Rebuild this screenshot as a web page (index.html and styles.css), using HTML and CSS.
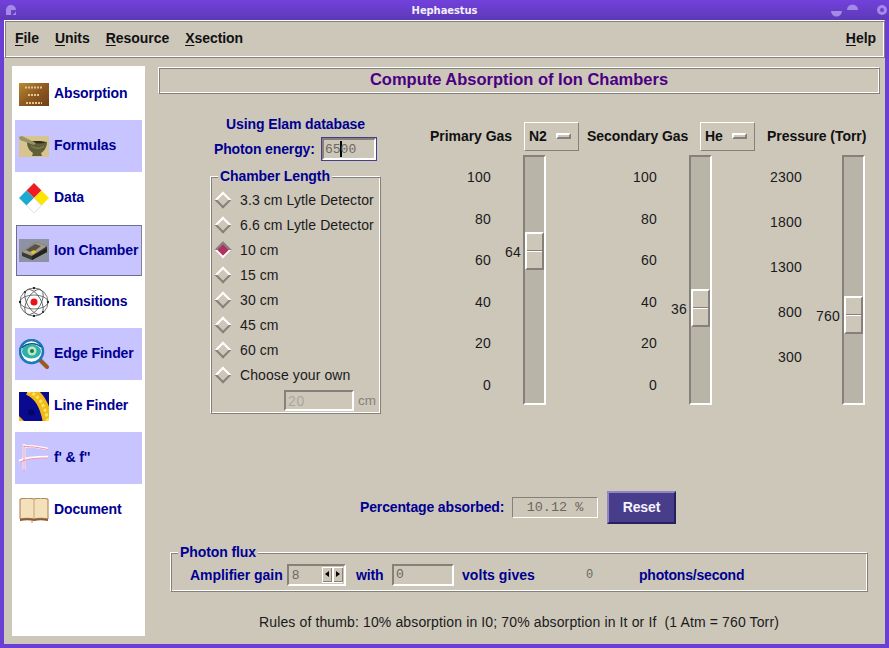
FILE: index.html
```html
<!DOCTYPE html>
<html lang="en">
<head>
<meta charset="utf-8">
<title>Hephaestus</title>
<link rel="stylesheet" href="styles.css">
</head>
<body>
<div class="window">
  <header class="titlebar">
    <svg class="wm wm-menu" width="12" height="12" viewBox="0 0 12 12"><path d="M1 6a5 5 0 1 1 5 5H1z M6 6v5h5V6z" fill="#a48ae6"/><path d="M6 6h5v1H7v4H6z" fill="#6a3fd0"/></svg>
    <span class="wintitle">Hephaestus</span>
    <svg class="wm wm-right" width="60" height="16" viewBox="0 0 60 16"><path d="M0 9h11a5.500 5.500 0 0 1-11 0z" fill="#a48ae6"/><path d="M16 8a5.500 5.500 0 0 1 11 0z" fill="#a48ae6"/><circle cx="51" cy="8" r="5" fill="#a48ae6"/><circle cx="51" cy="8" r="2" fill="#6a3fd0"/></svg>
  </header>
  <div class="client">
    <nav class="menubar ridge">
      <span class="menu"><u>F</u>ile</span>
      <span class="menu"><u>U</u>nits</span>
      <span class="menu"><u>R</u>esource</span>
      <span class="menu"><u>X</u>section</span>
      <span class="menu menu-help"><u>H</u>elp</span>
    </nav>
    <div class="main">
      <aside class="sidebar">
        <div class="nav">
          <svg class="icon" viewBox="0 0 30 23"><defs><linearGradient id="g1" x1="0" y1="0" x2="1" y2="1"><stop offset="0" stop-color="#b88a34"/><stop offset=".5" stop-color="#8f5a22"/><stop offset="1" stop-color="#6e3f1a"/></linearGradient></defs><rect width="30" height="23" fill="url(#g1)"/><g stroke="#e2c68c" stroke-width="1.800" stroke-dasharray="2 1"><path d="M6 4.500h18M9 12h12M7 20h16"/></g></svg>
          <span>Absorption</span>
        </div>
        <div class="nav nav-alt">
          <svg class="icon" viewBox="0 0 30 21"><rect width="30" height="21" fill="#d8c48e"/><path d="M8 6c6 1.500 14 1.500 20 0 0 6-4 10-6 11l1 3H13l1-3c-3-2-6-5-6-11z" fill="#5f5f38"/><path d="M8 6c6-1.500 14-1.500 20 0-5 2-15 2-20 0z" fill="#2f2c18"/><path d="M0 1l3-1 14 7-2 2L1 4z" fill="#96946a"/><path d="M12 10c4 3 10 3 13 0" stroke="#8f8c60" fill="none"/></svg>
          <span>Formulas</span>
        </div>
        <div class="nav">
          <svg class="icon" viewBox="0 0 30 30"><path d="M15 0l7.500 7.500L15 15 7.500 7.500z" fill="#ee1c25"/><path d="M7.500 7.500L15 15l-7.500 7.500L0 15z" fill="#1caad0"/><path d="M22.500 7.500L30 15l-7.500 7.500L15 15z" fill="#ffe400"/><path d="M15 15l7.500 7.500L15 30l-7.500-7.500z" fill="#fff" stroke="#ccc" stroke-width=".6"/></svg>
          <span>Data</span>
        </div>
        <div class="nav nav-alt nav-active">
          <svg class="icon" viewBox="0 0 30 23"><rect width="30" height="23" fill="#8d93a3"/><path d="M3 13L17 3l11 4v6L13 21 3 17z" fill="#3c3a35"/><path d="M3 13l10 4 15-10-11-4z" fill="#a39c88"/><path d="M7 11l9-6 6 2-9 7z" fill="#57524a"/><path d="M11 13l4-2 2 2-3 2z" fill="#e6c52a"/><path d="M13 17v4l15-8V9z" fill="#24231f"/></svg>
          <span>Ion Chamber</span>
        </div>
        <div class="nav">
          <svg class="icon" viewBox="0 0 30 30"><g fill="none" stroke="#555" stroke-width=".8"><circle cx="15" cy="15" r="14"/><ellipse cx="15" cy="15" rx="14" ry="7"/><ellipse cx="15" cy="15" rx="14" ry="7" transform="rotate(60 15 15)"/><ellipse cx="15" cy="15" rx="14" ry="7" transform="rotate(120 15 15)"/></g><circle cx="15" cy="15" r="3.500" fill="#ee1111"/><g fill="#222"><circle cx="15" cy="1" r="1.200"/><circle cx="29" cy="15" r="1.200"/><circle cx="15" cy="29" r="1.200"/><circle cx="1" cy="15" r="1.200"/><circle cx="6" cy="5" r="1"/><circle cx="24" cy="25" r="1"/></g></svg>
          <span>Transitions</span>
        </div>
        <div class="nav nav-alt">
          <svg class="icon" viewBox="0 0 30 30"><path d="M20 20l8 8" stroke="#9a5a20" stroke-width="4" stroke-linecap="round"/><circle cx="12.500" cy="12.500" r="11.500" fill="#fff" stroke="#1878b8" stroke-width="2.500"/><ellipse cx="12.500" cy="12.500" rx="9.500" ry="7" fill="#2fb0a8"/><circle cx="13" cy="12" r="4.500" fill="#bce8c0"/><circle cx="13" cy="12" r="2" fill="#157a58"/><path d="M3 9c4-5 14-6 19-1" stroke="#0c5a8a" stroke-width="1.500" fill="none"/></svg>
          <span>Edge Finder</span>
        </div>
        <div class="nav">
          <svg class="icon" viewBox="0 0 30 29"><rect width="30" height="29" fill="#0a0a90"/><path d="M9 -2C19 2 26 11 29 31" fill="none" stroke="#f4b818" stroke-width="10"/><path d="M9 -1C19 3 26 12 29 30" fill="none" stroke="#f8e858" stroke-width="3" stroke-dasharray="3 2"/><path d="M0 24l5 5H0z" fill="#f4b818"/><path d="M9 18c3-1 6 0 7 3-1 3-5 3-7 1z" fill="#050560"/></svg>
          <span>Line Finder</span>
        </div>
        <div class="nav nav-alt">
          <svg class="icon" viewBox="0 0 30 30"><g fill="none"><path d="M5 1v26M5 3c4 0 10 0 24 3M0 18c6-3 14-4 29-4" stroke="#fff" stroke-width="2.500"/><path d="M5 2v26M5 3.500c4 0 10 0 24 3M1 19c6-3 14-4 28-4" stroke="#f08aa0" stroke-width="1"/></g></svg>
          <span>f' &amp; f''</span>
        </div>
        <div class="nav">
          <svg class="icon" viewBox="0 0 30 25"><path d="M1 1c5-1 10-1 14 0 4-1 9-1 14 0v20c-5-1-10-1-14 0-4-1-9-1-14 0z" fill="#f5e0bc" stroke="#a67c4a"/><path d="M15 1v20" stroke="#c8a474"/><path d="M1 21c5-1 10-1 14 0 4-1 9-1 14 0v2c-5-1-10-1-14 0-4-1-9-1-14 0z" fill="#8a5a30"/><path d="M13 23v2" stroke="#c08a70"/></svg>
          <span>Document</span>
        </div>
      </aside>
      <main class="content">
        <h1 class="heading ridge">Compute Absorption of Ion Chambers</h1>
        <div class="upper">
          <section class="left">
            <div class="elam">Using Elam database</div>
            <div class="energy">
              <label class="blue energy-label">Photon energy:</label>
              <div class="entry entry-focus">65<i class="caret"></i>00</div>
            </div>
            <div class="group ridge chamber">
              <span class="legend">Chamber Length</span>
              <div class="radio"><i class="diamond"></i>3.3 cm Lytle Detector</div>
              <div class="radio"><i class="diamond"></i>6.6 cm Lytle Detector</div>
              <div class="radio"><i class="diamond diamond-on"></i>10 cm</div>
              <div class="radio"><i class="diamond"></i>15 cm</div>
              <div class="radio"><i class="diamond"></i>30 cm</div>
              <div class="radio"><i class="diamond"></i>45 cm</div>
              <div class="radio"><i class="diamond"></i>60 cm</div>
              <div class="radio"><i class="diamond"></i>Choose your own</div>
              <div class="own"><div class="entry entry-own">20</div><span>cm</span></div>
            </div>
          </section>
          <section class="right">
            <div class="gashead">
              <span class="gaslabel gl1">Primary Gas</span>
              <div class="optmenu ridge-out">N2<i class="optmark"></i></div>
              <span class="gaslabel gl2">Secondary Gas</span>
              <div class="optmenu ridge-out">He<i class="optmark"></i></div>
              <span class="gaslabel gl3">Pressure (Torr)</span>
            </div>
            <div class="scales">
              <div class="scale s1">
                <div class="ticks"><span>100</span><span>80</span><span>60</span><span>40</span><span>20</span><span>0</span></div>
                <div class="trough"><div class="thumb t1"><span class="val">64</span></div></div>
              </div>
              <div class="scale s2">
                <div class="ticks"><span>100</span><span>80</span><span>60</span><span>40</span><span>20</span><span>0</span></div>
                <div class="trough"><div class="thumb t2"><span class="val">36</span></div></div>
              </div>
              <div class="scale s3">
                <div class="ticks ticks-p"><span>2300</span><span>1800</span><span>1300</span><span>800</span><span>300</span></div>
                <div class="trough"><div class="thumb t3"><span class="val">760</span></div></div>
              </div>
            </div>
          </section>
        </div>
        <div class="result">
          <span class="blue result-label">Percentage absorbed:</span>
          <div class="readout">10.12 %</div>
          <button class="reset">Reset</button>
        </div>
        <div class="group ridge flux">
          <span class="legend">Photon flux</span>
          <span class="blue fl-amp">Amplifier gain</span>
          <div class="spin">8<span class="spinbtns"><i class="sbtn sl"></i><i class="sbtn sr"></i></span></div>
          <span class="blue fl-with">with</span>
          <div class="entry entry-volts">0</div>
          <span class="blue fl-volts">volts gives</span>
          <span class="photons">0</span>
          <span class="blue fl-photons">photons/second</span>
        </div>
        <p class="rules">Rules of thumb: 10% absorption in I0; 70% absorption in It or If&nbsp; (1 Atm = 760 Torr)</p>
      </main>
    </div>
  </div>
</div>
</body>
</html>
```

FILE: styles.css
```css
* { box-sizing: border-box; }
html, body { margin: 0; padding: 0; }
body { width: 889px; height: 648px; overflow: hidden; font-family: "Liberation Sans", Arial, sans-serif; }
.window { width: 889px; height: 648px; display: flex; flex-direction: column; background: #6b3fd4; }
.titlebar { height: 20px; flex: none; display: flex; align-items: center; justify-content: center; position: relative; background: linear-gradient(#7241dc, #5d39b6); }
.wintitle { color: #f2eefc; font: bold 10px "DejaVu Sans", sans-serif; letter-spacing: -.1px; }
.wm { position: absolute; }
.wm-menu { left: 5px; top: 4px; }
.wm-right { left: 831px; top: 2px; }
.client { flex: 1; margin: 0 4px 4px; background: #cdc7ba; display: flex; flex-direction: column; min-height: 0; }
.ridge { border: 1px solid; border-color: #fff #85817a #85817a #fff; box-shadow: inset 1px 1px 0 #85817a, inset -1px -1px 0 #fff; }
.menubar { height: 38px; flex: none; display: flex; align-items: center; padding: 0 8px 2px 10px; gap: 16px; font: bold 14px "Liberation Sans", sans-serif; letter-spacing: -.05px; color: #111; }
.menu u { text-decoration-thickness: 1px; text-underline-offset: 2px; }
.menu-help { margin-left: auto; }
.main { flex: 1; display: flex; min-height: 0; padding: 8px 0 8px 8px; }
.sidebar { width: 133px; flex: none; background: #fff; padding: 2px 3px 0; }
.nav { height: 52px; display: flex; align-items: center; padding: 0 0 0 4px; gap: 5px; color: #000090; font: bold 14px "Liberation Sans", sans-serif; letter-spacing: -.12px; }
.nav span { position: relative; top: -1px; }
.nav-alt { background: #c8c4ff; }
.nav-active { border: 1px solid #6f6e8e; border-right-color: #85819a; margin: 1px 0 0 1px; height: 51px; padding-left: 2px; }
.icon { width: 30px; flex: none; display: block; height: auto; }
.content { width: 722px; margin-left: 13px; flex: none; }
.heading { margin: 1px 0 0; height: 27px; color: #4b0082; font: bold 16.500px/23px "Liberation Sans", sans-serif; text-align: center; }
.upper { display: flex; height: 320px; }
.left { width: 171px; margin-left: 52px; flex: none; }
.elam { margin-top: 22px; height: 16px; line-height: 16px; text-align: center; color: #000090; font-size: 14px; font-weight: bold; letter-spacing: -.1px; }
.blue { color: #000090; font-size: 14px; font-weight: bold; letter-spacing: -.14px; white-space: nowrap; }
.energy { margin-top: 5px; height: 24px; display: flex; align-items: center; padding-left: 4px; gap: 7px; }
.energy-label { width: 100px; flex: none; }
.entry { font: 13px "Liberation Mono", monospace; color: #6b6860; background: #cdc7ba; border: 2px solid; border-color: #85817a #fff #fff #85817a; display: flex; align-items: center; padding-left: 2px; white-space: pre; }
.entry-focus { width: 56px; height: 24px; padding-left: 1px; outline: 1px solid #483d8b; outline-offset: -1px; border-width: 3px; border-color: #85817a #fff #fff #85817a; }
.caret { display: inline-block; width: 2px; height: 16px; background: #000; margin: 0 -1px; }
.group { position: relative; }
.legend { position: absolute; top: -9px; left: 7px; padding: 0 2px; background: #cdc7ba; color: #000090; font: bold 14px/16px "Liberation Sans", sans-serif; letter-spacing: -.1px; white-space: nowrap; }
.chamber { margin-top: 15px; height: 238px; padding-top: 10px; }
.radio { height: 25px; display: flex; align-items: center; font-size: 14px; letter-spacing: .1px; color: #1a1a1a; white-space: nowrap; padding-left: 5px; gap: 11px; }
.diamond { width: 12px; height: 12px; flex: none; transform: rotate(45deg); margin-left: 1px; border: 2px solid; border-color: #fff #85817a #85817a #fff; background: #cdc7ba; }
.diamond-on { border-color: #85817a #fff #fff #85817a; background: #b03060; }
.own { margin-top: 3px; display: flex; align-items: center; padding-left: 73px; gap: 4px; font-size: 13.500px; color: #85817a; }
.entry-own { width: 70px; height: 21px; color: #aaa69c; font-size: 14px; font-family: "Liberation Sans", sans-serif; letter-spacing: .6px; }
.right { margin-left: 49px; flex: none; padding-top: 28px; }
.gashead { height: 29px; display: flex; align-items: center; font-weight: bold; font-size: 14px; letter-spacing: -.05px; color: #111; }
.gaslabel { white-space: nowrap; padding-bottom: 2px; }
.gl1 { width: 94px; }
.gl2 { width: 113px; margin-left: 8px; }
.gl3 { margin-left: 12px; }
.optmenu { width: 55px; height: 29px; display: flex; align-items: center; justify-content: space-between; padding: 0 7px 2px 4px; flex: none; }
.ridge-out { border: 1px solid; border-color: #fff #85817a #85817a #fff; }
.optmark { width: 15px; height: 6px; background: #cdc7ba; border: 2px solid; border-color: #fff #85817a #85817a #fff; }
.scales { display: flex; margin-top: 4px; height: 250px; }
.scale { display: flex; justify-content: flex-end; flex: none; }
.s1 { width: 116px; }
.s2 { width: 166px; }
.s3 { width: 153px; }
.ticks { padding: 14px 32px 0 0; font-size: 14px; letter-spacing: .2px; color: #1a1a1a; text-align: right; }
.ticks span { display: block; height: 41.600px; line-height: 16px; }
.ticks-p { padding-right: 40px; }
.ticks-p span { height: 45px; }
.trough { width: 23px; height: 250px; position: relative; background: #b8b4a7; border: 2px solid; border-color: #85817a #fff #fff #85817a; }
.thumb { position: absolute; left: 0; width: 19px; height: 38px; background: linear-gradient(#cdc7ba 16px, #85817a 16px, #85817a 17px, #fff 17px, #fff 18px, #cdc7ba 18px); border: 2px solid; border-color: #fff #85817a #85817a #fff; }
.t1 { top: 75px; }
.t2 { top: 132px; }
.t3 { top: 139px; }
.val { position: absolute; right: 21px; top: 10px; font-size: 14px; letter-spacing: .2px; line-height: 16px; color: #1a1a1a; }
.result { margin-top: 77px; margin-left: 202px; display: flex; align-items: center; height: 33px; gap: 7px; }
.result-label { width: 145px; flex: none; padding-bottom: 2px; }
.readout { width: 86px; height: 21px; border: 1px solid; border-color: #85817a #fff #fff #85817a; font: 13.500px/19px "Liberation Mono", monospace; color: #6b6860; text-align: center; }
.reset { margin-left: 2px; width: 69px; height: 33px; padding: 0 0 2px; background: #483d8b; color: #f5f3ff; font: bold 14px "Liberation Sans", sans-serif; letter-spacing: -.1px; border: 2px solid; border-color: #8f86c8 #27205e #27205e #8f86c8; }
.flux { margin: 28px 0 0 12px; width: 698px; height: 40px; display: flex; align-items: center; padding: 5px 0 0 19px; }
.flux .legend { left: 7px; }
.fl-amp { width: 92px; flex: none; letter-spacing: -.05px; }
.spin { width: 59px; height: 22px; margin-left: 5px; flex: none; display: flex; align-items: center; justify-content: space-between; font: 13px "Liberation Sans", sans-serif; color: #6b6860; padding: 0 1px 0 3px; border: 2px solid; border-color: #85817a #fff #fff #85817a; }
.spinbtns { display: flex; gap: 2px; background: #fff; padding: 1px 0 1px 1px; height: 16px; }
.sbtn { width: 9px; height: 14px; background: #cdc7ba; position: relative; border-right: 1px solid #85817a; border-bottom: 1px solid #85817a; display: block; }
.sbtn::after { content: ""; position: absolute; top: 3px; left: 2px; border: 3px solid transparent; border-left-width: 0; border-right: 4px solid #000; }
.sr::after { border-right-width: 0; border-left: 4px solid #000; }
.fl-with { width: 28px; margin-left: 10px; flex: none; }
.entry-volts { width: 62px; height: 22px; margin: 0 8px; flex: none; }
.fl-volts { width: 73px; flex: none; letter-spacing: .05px; }
.photons { margin-left: 51px; width: 53px; flex: none; font: 12px "Liberation Mono", monospace; color: #6b6860; }
.fl-photons { letter-spacing: -.2px; }
.rules { margin: 22px 0 0 101px; font-size: 14px; line-height: 16px; letter-spacing: .13px; color: #1a1a1a; white-space: nowrap; }
```
